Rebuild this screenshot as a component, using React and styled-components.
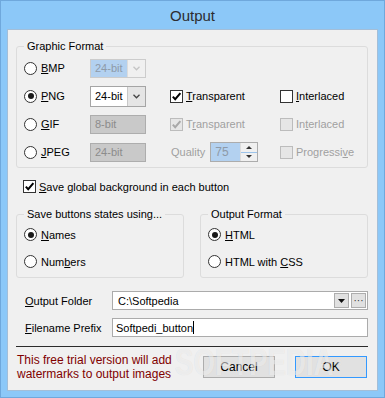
import React from 'react';
import styled, { createGlobalStyle } from 'styled-components';

const GlobalStyle = createGlobalStyle`
  html, body {
    margin: 0;
    padding: 0;
    background: #ffffff;
  }
  body {
    font-family: "Liberation Sans", Arial, sans-serif;
    font-size: 11px;
    color: #000000;
  }
`;

const Window = styled.div`
  position: relative;
  width: 385px;
  height: 398px;
  box-sizing: border-box;
  background: #8cc8f8;
  border: 1px solid #6fa8dc;
  display: flex;
  flex-direction: column;
  overflow: hidden;
`;

const TitleBar = styled.div`
  height: 28px;
  display: flex;
  align-items: center;
  justify-content: center;
  font-size: 15px;
  color: #2d2d30;
`;

const Client = styled.div`
  flex: 1;
  margin: 0 6px 6px;
  border: 1px solid #a3bed8;
  background: #f0f0f0;
  padding: 10px 9px 0 8px;
  display: flex;
  flex-direction: column;
`;

const Group = styled.fieldset`
  margin: 0;
  min-width: 0;
  border: 1px solid #dcdcdc;
  border-radius: 3px;
  padding: ${(p) => p.$pad || '1px 7px 1px'};
`;

const Legend = styled.legend`
  padding: 0 3px;
  line-height: 13px;
  font-size: 11px;
`;

const FormatGrid = styled.div`
  display: grid;
  grid-template-columns: 66px 80px 110px 1fr;
  grid-auto-rows: 28px;
  align-items: center;
`;

const Option = styled.label`
  display: inline-flex;
  align-items: center;
  gap: ${(p) => (p.$gap ? p.$gap : 4)}px;
  white-space: nowrap;
  color: ${(p) => (p.$disabled ? '#a0a0a0' : '#000000')};
`;

const RadioCircle = styled.span`
  width: 13px;
  height: 13px;
  box-sizing: border-box;
  border-radius: 50%;
  border: 1px solid #333333;
  background: #ffffff;
  display: flex;
  align-items: center;
  justify-content: center;

  &::after {
    content: '';
    width: 6px;
    height: 6px;
    border-radius: 50%;
    background: #1a1a1a;
    display: ${(p) => (p.$checked ? 'block' : 'none')};
  }
`;

const CheckBox = styled.span`
  width: 13px;
  height: 13px;
  box-sizing: border-box;
  border: 1px solid ${(p) => (p.$disabled ? '#bcbcbc' : '#333333')};
  background: ${(p) => (p.$disabled ? '#e6e6e6' : '#ffffff')};
  display: flex;
  align-items: center;
  justify-content: center;
`;

const Key = styled.span`
  text-decoration: underline;
  text-underline-offset: 1px;
`;

const Combo = styled.div`
  width: 56px;
  height: ${(p) => p.$h}px;
  box-sizing: border-box;
  border: 1px solid ${(p) => (p.$disabled ? '#cccccc' : '#a5a5a5')};
  display: flex;
`;

const ComboText = styled.div`
  flex: 1;
  display: flex;
  align-items: center;
  padding-left: 4px;
  background: ${(p) => (p.$disabled ? '#b3d1f0' : '#ffffff')};
  color: ${(p) => (p.$disabled ? '#8e9aa8' : '#000000')};
`;

const ComboButton = styled.div`
  width: 17px;
  display: flex;
  align-items: center;
  justify-content: center;
  background: ${(p) => (p.$disabled ? '#f0f0f0' : '#e5e5e5')};
  border-left: 1px solid ${(p) => (p.$disabled ? '#dcdcdc' : '#c8c8c8')};
`;

const GreyField = styled.div`
  width: 56px;
  height: 19px;
  box-sizing: border-box;
  border: 1px solid #adadad;
  background: #c9c9c9;
  color: #8c8c8c;
  display: flex;
  align-items: center;
  padding-left: 4px;
`;

const QualityCell = styled.div`
  display: flex;
  align-items: center;
  gap: 5px;
  padding-left: 1px;
  color: #a0a0a0;
`;

const Spin = styled.div`
  width: 48px;
  height: 20px;
  box-sizing: border-box;
  border: 1px solid #acacac;
  background: #b3d1f0;
  display: flex;
`;

const SpinText = styled.div`
  flex: 1;
  display: flex;
  align-items: center;
  padding-left: 4px;
  color: #8e9aa8;
  font-size: 12px;
`;

const SpinButtons = styled.div`
  width: 16px;
  display: flex;
  flex-direction: column;
  background: #f0f0f0;
  border-left: 1px solid #dcdcdc;
`;

const SpinHalf = styled.div`
  flex: 1;
  display: flex;
  align-items: center;
  justify-content: center;
  border-top: ${(p) => (p.$lower ? '1px solid #9cc3ea' : 'none')};
`;

const SaveRow = styled.div`
  margin-top: 12px;
  padding-left: 7px;
  height: 13px;
  display: flex;
  align-items: center;
`;

const GroupPair = styled.div`
  margin-top: 15px;
  display: grid;
  grid-template-columns: 1fr 1fr;
  gap: 16px;
`;

const StateList = styled.div`
  display: grid;
  grid-auto-rows: 27px;
  align-items: center;
`;

const FieldRow = styled.div`
  display: grid;
  grid-template-columns: 87px 1fr;
  align-items: center;
  padding-left: 9px;
  margin-top: ${(p) => p.$mt}px;
`;

const FolderCombo = styled.div`
  height: 19px;
  box-sizing: border-box;
  border: 1px solid #ababab;
  background: #ffffff;
  display: flex;
  align-items: center;
  padding: 0 1px 0 5px;
  gap: 2px;
`;

const FolderText = styled.div`
  flex: 1;
`;

const SmallButton = styled.div`
  width: 15px;
  height: 15px;
  box-sizing: border-box;
  border: 1px solid #adadad;
  background: #e1e1e1;
  display: flex;
  align-items: center;
  justify-content: center;
  font-size: 10px;
  line-height: 1;
  color: #333333;
`;

const TextField = styled.div`
  height: 19px;
  box-sizing: border-box;
  border: 1px solid #ababab;
  background: #ffffff;
  display: flex;
  align-items: center;
  padding-left: 3px;
`;

const Caret = styled.span`
  width: 1px;
  height: 13px;
  background: #000000;
`;

const Separator = styled.div`
  margin-top: 9px;
  height: 1px;
  background: #2b2b2b;
`;

const Footer = styled.div`
  margin-top: 6px;
  display: flex;
  align-items: center;
  justify-content: space-between;
  padding-left: 1px;
  padding-right: 1px;
`;

const TrialNote = styled.div`
  color: #800000;
  font-size: 12px;
  line-height: 14px;
`;

const ButtonBar = styled.div`
  display: flex;
  gap: 20px;
`;

const PushButton = styled.div`
  width: 72px;
  height: 22px;
  box-sizing: border-box;
  border: 1px solid ${(p) => (p.$default ? '#3399ff' : '#adadad')};
  background: #e1e1e1;
  display: flex;
  align-items: center;
  justify-content: center;
  font-size: 12px;
`;

/* faint site watermark stamped over the lower right of the dialog */
const Watermark = styled.div`
  position: absolute;
  left: 174px;
  top: 344px;
  font-family: "Liberation Sans", Arial, sans-serif;
  font-weight: bold;
  font-size: 36px;
  line-height: 36px;
  white-space: nowrap;
  transform: scaleX(0.77);
  transform-origin: left top;
  color: rgba(255, 255, 255, 0.55);
  text-shadow: 0 0 1px rgba(0, 0, 0, 0.1);
  pointer-events: none;
`;

const Registered = styled.span`
  font-size: 9px;
  vertical-align: top;
  margin-left: 3px;
`;

const Chevron = ({ color = '#444' }) => (
  <svg width="7" height="5" viewBox="0 0 7 5">
    <polyline points="0.5,0.8 3.5,3.8 6.5,0.8" fill="none" stroke={color} strokeWidth="1.3" />
  </svg>
);

const Check = ({ color = '#000' }) => (
  <svg width="11" height="11" viewBox="0 0 11 11">
    <polyline points="1.8,5.6 4.2,8.2 9.4,2.2" fill="none" stroke={color} strokeWidth="2" />
  </svg>
);

const Triangle = ({ up, color = '#222', w = 7, h = 4 }) => (
  <svg width={w} height={h} viewBox={`0 0 ${w} ${h}`}>
    <polygon points={up ? `0,${h} ${w},${h} ${w / 2},0` : `0,0 ${w},0 ${w / 2},${h}`} fill={color} />
  </svg>
);

const Radio = ({ checked, children }) => (
  <Option>
    <RadioCircle $checked={checked} />
    <span>{children}</span>
  </Option>
);

const Checkbox = ({ checked, disabled, children }) => (
  <Option $disabled={disabled} $gap={3}>
    <CheckBox $disabled={disabled}>{checked && <Check color={disabled ? '#a8a8a8' : '#000'} />}</CheckBox>
    <span>{children}</span>
  </Option>
);

const DropCombo = ({ value, disabled, h }) => (
  <Combo $disabled={disabled} $h={h}>
    <ComboText $disabled={disabled}>{value}</ComboText>
    <ComboButton $disabled={disabled}>
      <Chevron color={disabled ? '#c4c4c4' : '#444'} />
    </ComboButton>
  </Combo>
);

const App = () => (
  <>
    <GlobalStyle />
    <Window>
      <TitleBar>Output</TitleBar>
      <Client>
        <Group>
          <Legend>Graphic Format</Legend>
          <FormatGrid>
            <Radio><Key>B</Key>MP</Radio>
            <DropCombo value="24-bit" disabled h={19} />
            <span />
            <span />

            <Radio checked><Key>P</Key>NG</Radio>
            <DropCombo value="24-bit" h={21} />
            <Checkbox checked><Key>T</Key>ransparent</Checkbox>
            <Checkbox><Key>I</Key>nterlaced</Checkbox>

            <Radio><Key>G</Key>IF</Radio>
            <GreyField>8-bit</GreyField>
            <Checkbox checked disabled>T<Key>r</Key>ansparent</Checkbox>
            <Checkbox disabled>In<Key>t</Key>erlaced</Checkbox>

            <Radio><Key>J</Key>PEG</Radio>
            <GreyField>24-bit</GreyField>
            <QualityCell>
              <span>Quality</span>
              <Spin>
                <SpinText>75</SpinText>
                <SpinButtons>
                  <SpinHalf><Triangle up color="#333" w={6} h={3} /></SpinHalf>
                  <SpinHalf $lower><Triangle color="#333" w={6} h={3} /></SpinHalf>
                </SpinButtons>
              </Spin>
            </QualityCell>
            <Checkbox disabled>Progressi<Key>v</Key>e</Checkbox>
          </FormatGrid>
        </Group>

        <SaveRow>
          <Checkbox checked><Key>S</Key>ave global background in each button</Checkbox>
        </SaveRow>

        <GroupPair>
          <Group $pad="0 7px 2px">
            <Legend>Save buttons states using...</Legend>
            <StateList>
              <Radio checked><Key>N</Key>ames</Radio>
              <Radio>Num<Key>b</Key>ers</Radio>
            </StateList>
          </Group>
          <Group $pad="0 7px 2px">
            <Legend>Output Format</Legend>
            <StateList>
              <Radio checked><Key>H</Key>TML</Radio>
              <Radio>HTML with <Key>C</Key>SS</Radio>
            </StateList>
          </Group>
        </GroupPair>

        <FieldRow $mt={13}>
          <span><Key>O</Key>utput Folder</span>
          <FolderCombo>
            <FolderText>C:\Softpedia</FolderText>
            <SmallButton><Triangle color="#111" w={7} h={4} /></SmallButton>
            <SmallButton>···</SmallButton>
          </FolderCombo>
        </FieldRow>

        <FieldRow $mt={8}>
          <span><Key>F</Key>ilename Prefix</span>
          <TextField>
            <span>Softpedi_button</span>
            <Caret />
          </TextField>
        </FieldRow>

        <Separator />

        <Footer>
          <TrialNote>
            This free trial version will add
            <br />
            watermarks to output images
          </TrialNote>
          <ButtonBar>
            <PushButton>Cancel</PushButton>
            <PushButton $default>OK</PushButton>
          </ButtonBar>
        </Footer>
      </Client>
      <Watermark>SOFTPEDIA<Registered>®</Registered></Watermark>
    </Window>
  </>
);

export default App;
